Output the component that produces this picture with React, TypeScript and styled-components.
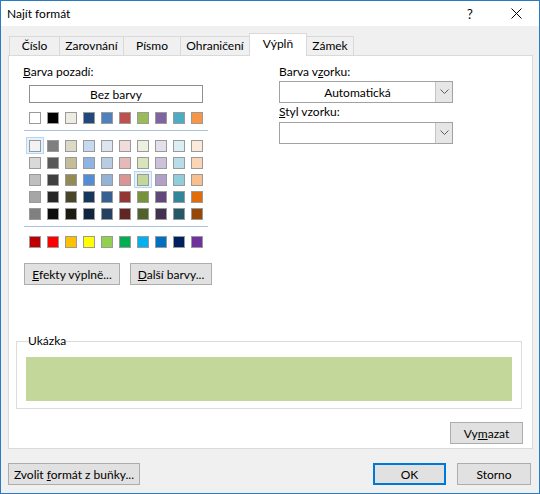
import React from "react";
import styled, { createGlobalStyle, css } from "styled-components";

const FONT = `Lato, "Noto Sans", "Liberation Sans", sans-serif`;

const GlobalStyle = createGlobalStyle`
  html, body { margin: 0; padding: 0; background: #fff; }
  body { font-family: ${FONT}; font-size: 12px; color: #000; }
  * { box-sizing: border-box; }
`;

const Window = styled.div`
  width: 540px;
  height: 494px;
  border: 1px solid #2b7bc0;
  display: flex;
  flex-direction: column;
  background: #f0f0f0;
`;

const TitleBar = styled.div`
  height: 25px;
  background: #fff;
  display: flex;
  align-items: center;
  padding-left: 6px;
`;

const Title = styled.div`
  flex: 1;
  font-size: 12px;
`;

const TitleButton = styled.div`
  width: 46px;
  height: 25px;
  display: flex;
  align-items: center;
  justify-content: center;
  font-size: 13px;
  color: #000;
`;

const Body = styled.div`
  flex: 1;
  display: flex;
  flex-direction: column;
  padding: 7px 6px 0 7px;
`;

const TabStrip = styled.div`
  display: flex;
  align-items: flex-end;
  height: 22px;
  padding-left: 2px;
  position: relative;
  z-index: 1;
`;

const Tab = styled.div<{ $w: number; $active?: boolean }>`
  width: ${(p) => p.$w}px;
  height: 19px;
  margin-left: -1px;
  border: 1px solid #d9d9d9;
  border-bottom: none;
  background: #f0f0f0;
  display: flex;
  align-items: center;
  justify-content: center;
  padding-bottom: 1px;
  ${(p) =>
    p.$active &&
    css`
      height: 23px;
      background: #fff;
      margin-bottom: -1px;
      padding-bottom: 4px;
      position: relative;
      z-index: 2;
    `}
`;

const Panel = styled.div`
  height: 394px;
  background: #fff;
  border: 1px solid #d9d9d9;
  display: flex;
  flex-direction: column;
`;

const TopSection = styled.div`
  display: flex;
  padding: 8px 0 0 14px;
`;

const LeftCol = styled.div`
  width: 256px;
  display: flex;
  flex-direction: column;
  align-items: flex-start;
`;

const RightCol = styled.div`
  width: 174px;
  display: flex;
  flex-direction: column;
`;

const Label = styled.div<{ $mt?: number }>`
  height: 16px;
  line-height: 16px;
  margin-top: ${(p) => p.$mt ?? 0}px;
  white-space: nowrap;
`;

const NoColor = styled.div`
  margin: 5px 0 0 6px;
  width: 174px;
  height: 18px;
  border: 1px solid #8e8e8e;
  display: flex;
  align-items: center;
  justify-content: center;
`;

const SwatchGrid = styled.div<{ $mt: number }>`
  margin: ${(p) => p.$mt}px 0 0 3px;
  display: grid;
  grid-template-columns: repeat(10, 18px);
  grid-auto-rows: 17px;
`;

const Cell = styled.div<{ $sel?: boolean }>`
  display: flex;
  align-items: center;
  justify-content: center;
  border: 1px solid transparent;
  ${(p) =>
    p.$sel &&
    css`
      background: #e5f1fb;
      border-color: #b6d6f2;
    `}
`;

const Swatch = styled.div<{ $c: string }>`
  width: 12px;
  height: 12px;
  border: 1px solid #9a9a9a;
  background: ${(p) => p.$c};
`;

const Separator = styled.div<{ $mt: number }>`
  margin: ${(p) => p.$mt}px 0 0 1px;
  width: 184px;
  height: 1px;
  background: #a9c2e2;
`;

const ButtonRow = styled.div`
  display: flex;
  gap: 10px;
  margin: 13px 0 0 1px;
`;

const Button = styled.div<{ $w: number; $default?: boolean }>`
  width: ${(p) => p.$w}px;
  height: 22px;
  background: #e1e1e1;
  border: 1px solid #adadad;
  display: flex;
  align-items: center;
  justify-content: center;
  white-space: nowrap;
  ${(p) =>
    p.$default &&
    css`
      border: 2px solid #0078d7;
    `}
`;

const Combo = styled.div<{ $mt: number }>`
  margin-top: ${(p) => p.$mt}px;
  width: 174px;
  height: 22px;
  border: 1px solid #a2a2a2;
  background: #fff;
  display: flex;
`;

const ComboText = styled.div`
  flex: 1;
  display: flex;
  align-items: center;
  justify-content: center;
`;

const ComboArrow = styled.div`
  width: 17px;
  background: #e6e6e6;
  border-left: 1px solid #c4c4c4;
  display: flex;
  align-items: center;
  justify-content: center;
`;

const Spacer = styled.div`
  flex: 1;
`;

const SampleGroup = styled.fieldset`
  margin: 0 10px 0 7px;
  padding: 0 9px 7px 9px;
  border: 1px solid #dcdcdc;
  min-width: 0;
`;

const SampleLegend = styled.legend`
  margin-left: 2px;
  padding: 0;
  line-height: 14px;
  font-size: 12px;
`;

const SampleFill = styled.div<{ $c: string }>`
  margin-top: 9px;
  height: 44px;
  background: ${(p) => p.$c};
`;

const PanelFooter = styled.div`
  display: flex;
  justify-content: flex-end;
  padding: 13px 9px 4px 0;
`;

const BottomRow = styled.div`
  display: flex;
  align-items: center;
  margin-top: 14px;
  padding-right: 2px;
`;

const BottomGap = styled.div`
  width: 11px;
`;

const U = styled.span`
  text-decoration: underline;
  text-underline-offset: 1px;
`;

const Chevron = () => (
  <svg width="9" height="6" viewBox="0 0 9 6">
    <polyline points="0.5,0.5 4.5,4.5 8.5,0.5" fill="none" stroke="#5c5c5c" strokeWidth="1" />
  </svg>
);

const CloseIcon = () => (
  <svg width="11" height="11" viewBox="0 0 11 11">
    <path d="M0.5 0.5 L10.5 10.5 M10.5 0.5 L0.5 10.5" stroke="#000" strokeWidth="1" />
  </svg>
);

const baseRow = ["#FFFFFF", "#000000", "#EEECE1", "#1F497D", "#4F81BD", "#C0504D", "#9BBB59", "#8064A2", "#4BACC6", "#F79646"];
const themeRows = [
  ["#F2F2F2", "#7F7F7F", "#DDD9C4", "#C5D9F1", "#DCE6F1", "#F2DCDB", "#EBF1DE", "#E4DFEC", "#DAEEF3", "#FDE9D9"],
  ["#D9D9D9", "#595959", "#C4BD97", "#8DB4E2", "#B8CCE4", "#E6B8B7", "#D8E4BC", "#CCC0DA", "#B7DEE8", "#FCD5B4"],
  ["#BFBFBF", "#404040", "#948A54", "#538DD5", "#95B3D7", "#DA9694", "#C4D79B", "#B1A0C7", "#92CDDC", "#FABF8F"],
  ["#A6A6A6", "#262626", "#494529", "#16365C", "#366092", "#963634", "#76933C", "#60497A", "#31869B", "#E26B0A"],
  ["#808080", "#0D0D0D", "#1D1B10", "#0F243E", "#244062", "#632523", "#4F6228", "#403151", "#215967", "#974706"],
];
const standardRow = ["#C00000", "#FF0000", "#FFC000", "#FFFF00", "#92D050", "#00B050", "#00B0F0", "#0070C0", "#002060", "#7030A0"];

const tabs: { label: string; w: number; active?: boolean }[] = [
  { label: "Číslo", w: 51 },
  { label: "Zarovnání", w: 65 },
  { label: "Písmo", w: 58 },
  { label: "Ohraničení", w: 70 },
  { label: "Výplň", w: 58, active: true },
  { label: "Zámek", w: 48 },
];

const highlighted = new Set(["0-0", "2-6"]);

export default function App() {
  return (
    <>
      <GlobalStyle />
      <Window>
        <TitleBar>
          <Title>Najít formát</Title>
          <TitleButton>?</TitleButton>
          <TitleButton>
            <CloseIcon />
          </TitleButton>
        </TitleBar>
        <Body>
          <TabStrip>
            {tabs.map((t) => (
              <Tab key={t.label} $w={t.w} $active={t.active}>
                {t.label}
              </Tab>
            ))}
          </TabStrip>
          <Panel>
            <TopSection>
              <LeftCol>
                <Label>
                  <U>B</U>arva pozadí:
                </Label>
                <NoColor>Bez barvy</NoColor>
                <SwatchGrid $mt={6}>
                  {baseRow.map((c) => (
                    <Cell key={c}>
                      <Swatch $c={c} />
                    </Cell>
                  ))}
                </SwatchGrid>
                <Separator $mt={4} />
                <SwatchGrid $mt={6}>
                  {themeRows.map((row, r) =>
                    row.map((c, i) => (
                      <Cell key={`${r}-${i}`} $sel={highlighted.has(`${r}-${i}`)}>
                        <Swatch $c={c} />
                      </Cell>
                    ))
                  )}
                </SwatchGrid>
                <Separator $mt={4} />
                <SwatchGrid $mt={6}>
                  {standardRow.map((c) => (
                    <Cell key={c}>
                      <Swatch $c={c} />
                    </Cell>
                  ))}
                </SwatchGrid>
                <ButtonRow>
                  <Button $w={96}>
                    <span>
                      <U>E</U>fekty výplně...
                    </span>
                  </Button>
                  <Button $w={82}>
                    <span>
                      <U>D</U>alší barvy...
                    </span>
                  </Button>
                </ButtonRow>
              </LeftCol>
              <RightCol>
                <Label>
                  Barva v<U>z</U>orku:
                </Label>
                <Combo $mt={1}>
                  <ComboText>Automatická</ComboText>
                  <ComboArrow>
                    <Chevron />
                  </ComboArrow>
                </Combo>
                <Label $mt={1}>
                  <U>S</U>tyl vzorku:
                </Label>
                <Combo $mt={2}>
                  <ComboText />
                  <ComboArrow>
                    <Chevron />
                  </ComboArrow>
                </Combo>
              </RightCol>
            </TopSection>
            <Spacer />
            <SampleGroup>
              <SampleLegend>Ukázka</SampleLegend>
              <SampleFill $c="#C4D79B" />
            </SampleGroup>
            <PanelFooter>
              <Button $w={73}>
                <span>
                  Vy<U>m</U>azat
                </span>
              </Button>
            </PanelFooter>
          </Panel>
          <BottomRow>
            <Button $w={132}>
              <span>
                Zvolit <U>f</U>ormát z buňky...
              </span>
            </Button>
            <Spacer />
            <Button $w={73} $default>
              OK
            </Button>
            <BottomGap />
            <Button $w={74}>Storno</Button>
          </BottomRow>
        </Body>
      </Window>
    </>
  );
}
